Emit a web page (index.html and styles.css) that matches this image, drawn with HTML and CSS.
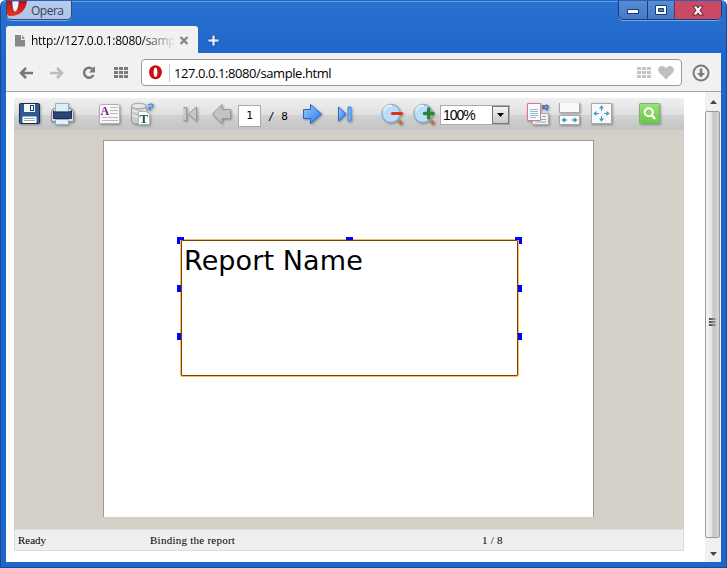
FILE: index.html
```
<!DOCTYPE html>
<html lang="en">
<head>
<meta charset="utf-8">
<title>http://127.0.0.1:8080/sample.html</title>
<link rel="stylesheet" href="styles.css">
</head>
<body>
<div class="window">
  <header class="titlebar">
    <div class="opera-menu">
      <svg width="23" height="17" viewBox="0 0 23 17"><defs><linearGradient id="or" x2="0" y2="1"><stop stop-color="#b81410"/><stop offset="1" stop-color="#e83426"/></linearGradient></defs><path d="M0 0H20C19 9 13 15 3 15Q0 15 0 12Z" fill="url(#or)"/><path d="M5 0H12C12 6 10 11 8 11S5 6 5 0Z" fill="#eef3fc" stroke="#8c2637" stroke-width=".7"/></svg>
      <span>Opera</span>
    </div>
    <div class="controls">
      <div class="control minimize"><svg width="14" height="8" viewBox="0 0 14 8"><rect x="1.5" y="1.5" width="11" height="4" fill="#fff" stroke="#173c78"/></svg></div>
      <div class="control maximize"><svg width="12" height="10" viewBox="0 0 12 10"><path fill-rule="evenodd" d="M.5.5h11v9H.5ZM3.5 3.5v3h5v-3Z" fill="#fff" stroke="#173c78"/></svg></div>
      <div class="control close"><svg width="12" height="11" viewBox="0 0 12 11"><path d="M1 1H4.5L6 3 7.5 1H11L8 5.3 11.3 10H7.5L6 7.8 4.5 10H.7L4 5.3Z" fill="#fff" stroke="#6d1e38"/></svg></div>
    </div>
  </header>
  <div class="tabs">
    <div class="tab">
      <svg width="11" height="12" viewBox="0 0 11 12"><path d="M0 0H6V5H10V11.5H0Z M7 0 10 4H7Z" fill="#888"/></svg>
      <span class="tab-title">http://127.0.0.1:8080/samp</span>
      <svg class="tab-close" width="10" height="9" viewBox="0 0 10 9"><path d="M1.5 1 8.5 8M8.5 1 1.5 8" stroke="#858585" stroke-width="2.3"/></svg>
    </div>
    <svg class="new-tab" width="13" height="13" viewBox="0 0 13 13"><path d="M5 1H8V5H12V8H8V12H5V8H1V5H5Z" fill="#e2efff" stroke="#174e9e" stroke-width=".8"/></svg>
  </div>
  <nav class="navigation">
    <svg class="back" width="14" height="12" viewBox="0 0 14 12"><path d="M14 6H3M7 1 2 6 7 11" fill="none" stroke="#737779" stroke-width="2.5"/></svg>
    <svg class="forward" width="14" height="12" viewBox="0 0 14 12"><path d="M0 6H11M7 1 12 6 7 11" fill="none" stroke="#babcbd" stroke-width="2.5"/></svg>
    <svg class="reload" width="14" height="14" viewBox="0 0 14 14"><path d="M10.5 3A5 5 0 1 0 11.5 9" fill="none" stroke="#777b7d" stroke-width="2.5"/><path d="M13 0V6.5H7Z" fill="#777b7d"/></svg>
    <svg class="speed" width="15" height="12" viewBox="0 0 15 12"><path d="M0 0h4v3H0zm5 0h4v3H5zm5 0h4v3h-4zM0 4h4v3H0zm5 0h4v3H5zm5 0h4v3h-4zM0 8h4v3H0zm5 0h4v3H5zm5 0h4v3h-4z" fill="#777b7d"/></svg>
    <div class="address">
      <svg class="opera-badge" width="14" height="15" viewBox="0 0 14 15"><ellipse cx="6.5" cy="7.2" rx="6.4" ry="7" fill="#c90d16"/><ellipse cx="6.5" cy="7.2" rx="1.9" ry="4.8" fill="#fff"/></svg>
      <span class="url">127.0.0.1:8080/sample.html</span>
      <svg width="15" height="12" viewBox="0 0 15 12"><path d="M0 0h4v3H0zm5 0h4v3H5zm5 0h4v3h-4zM0 4h4v3H0zm5 0h4v3H5zm5 0h4v3h-4zM0 8h4v3H0zm5 0h4v3H5zm5 0h4v3h-4z" fill="#c4c4c4"/></svg>
      <svg class="heart" width="16" height="14" viewBox="0 0 16 14"><path d="M8 13.5 1.5 7C-1.5 3.5 1 0 4.2 0 6 0 7.2 1 8 2.3 8.8 1 10 0 11.8 0 15 0 17.5 3.5 14.5 7Z" fill="#c0c0c0"/></svg>
    </div>
    <svg class="downloads" width="18" height="18" viewBox="0 0 18 18"><circle cx="9" cy="9" r="7.5" fill="none" stroke="#777b7d" stroke-width="2"/><path d="M7.7 4.5h2.6V9H13L9 13.5 5 9H7.7Z" fill="#777b7d"/></svg>
  </nav>
  <main class="content">
    <section class="viewer">
      <div class="toolbar">
        <svg class="save" width="24" height="24" viewBox="0 0 24 24"><rect x="1.5" y="1.5" width="20" height="20" rx="1" fill="#31578f" stroke="#172e53"/><path d="M6 2H17V10H6Z" fill="#f1f5f9"/><path d="M12 3H16V9H12Z" fill="#263f68"/><path d="M13 4h2v4h-2z" fill="#e9eff7"/><path d="M4.5 14.5H18.5V21H4.5Z" fill="#fff"/><path d="M6 16.5H17M6 18.5H17" stroke="#9caaa7"/></svg>
        <svg class="print" width="26" height="24" viewBox="0 0 26 24"><path d="M1.5 10Q2 6.5 5 6.5H20Q23 6.5 23.5 10V19.5H1.5Z" fill="#dce0e5" stroke="#7e899a"/><path d="M5.5 1.5H18.5V10H5.5Z" fill="#daf0f5" stroke="#99b3b9"/><path d="M3.5 9Q4 10 6 10H18Q21 10 21.5 8.5V16.5H3.5Z" fill="#2c4478" stroke="#18294e"/><path d="M5.5 17.5H18.5V22.5H5.5Z" fill="#dff3f7" stroke="#95b1b8"/></svg>
        <svg class="parameters" width="24" height="24" viewBox="0 0 24 24"><rect x="1.5" y="2.5" width="20" height="19" rx="1" fill="#f8f7f7" stroke="#b5afb5"/><path d="M12 5.5H20M12 8.5H20M12 11.5H20M4 15.5H20M4 18.5H20" stroke="#bbb"/><text class="icon-a" x="2.5" y="13">A</text></svg>
        <svg class="data" width="26" height="24" viewBox="0 0 26 24"><path d="M1.5 4V19Q2 22 9 22Q16 22 16 19V4Z" fill="#c8cbcb" stroke="#999e9e"/><ellipse cx="8.7" cy="4" rx="7.2" ry="2.7" fill="#e5e9e9" stroke="#a0a5a5"/><path d="M2 8Q8 12 16 8M2 13Q8 17 16 13" fill="none" stroke="#eef3f3" stroke-width="1.5"/><path d="M8.5 9.5H16L19.5 12V22.5H8.5Z" fill="#fff" stroke="#b1b5b2"/><text class="icon-t" x="9.5" y="20.5">T</text><path d="M18 3.5Q19 2 21 2Q23.5 2.5 22.5 5Q21 6.5 18.5 6.5M20.5 4.5 18.5 6.5 20.5 8.5" fill="none" stroke="#568ce0" stroke-width="1.7"/></svg>
        <svg class="first" width="18" height="22" viewBox="0 0 18 22"><path d="M1.5 4.5H4.5V17.5H1.5M14.5 4V18L6.5 11Z" fill="#c8c8c8" stroke="#999"/></svg>
        <svg class="previous" width="24" height="24" viewBox="0 0 24 24"><path d="M1.5 12 11 2.5V7.5H19.5V16.5H11V21.5Z" fill="#c3c3c3" stroke="#999"/></svg>
        <input class="page-input" aria-label="Page" value="1">
        <span class="page-total">/ 8</span>
        <svg class="next" width="22" height="24" viewBox="0 0 22 24"><defs><linearGradient id="bl" x2="1" y2="1"><stop stop-color="#9bd2ff"/><stop offset="1" stop-color="#2670ee"/></linearGradient></defs><path d="M1.5 7.5H8.5V2.5L19.5 12 8.5 21.5V16.5H1.5Z" fill="url(#bl)" stroke="#2366cf"/></svg>
        <svg class="last" width="17" height="22" viewBox="0 0 17 22"><path d="M1.5 4V18L9 11Z" fill="url(#bl)" stroke="#2366cf"/><path d="M11 4H14V18H11Z" fill="#72b4ff" stroke="#4288e8"/></svg>
        <svg class="zoom-out" width="26" height="24" viewBox="0 0 26 24"><path d="m16 16 4 4" stroke="#8a9fac" stroke-width="2"/><path d="m19 19 3 3" stroke="#bb7b3b" stroke-width="3.5"/><circle cx="11" cy="11.5" r="9" fill="#bcdefa" stroke="#8bb0ce" stroke-width="1.3"/><path d="M3.5 9Q6 3 12 4" fill="none" stroke="#e0f2ff" stroke-width="2"/><path d="M12.5 11.5H21.5" stroke="#df3211" stroke-width="3.2" stroke-linecap="round"/></svg>
        <svg class="zoom-in" width="26" height="24" viewBox="0 0 26 24"><path d="m16 16 4 4" stroke="#8a9fac" stroke-width="2"/><path d="m19 19 3 3" stroke="#bb7b3b" stroke-width="3.5"/><circle cx="11" cy="11.5" r="9" fill="#bcdefa" stroke="#8bb0ce" stroke-width="1.3"/><path d="M3.5 9Q6 3 12 4" fill="none" stroke="#e0f2ff" stroke-width="2"/><path d="M12.5 11.5H21M16.7 7V16" stroke="#2c8430" stroke-width="3.6" stroke-linecap="round"/></svg>
        <div class="zoom-select"><span>100%</span><div class="select-button"><svg width="7" height="4" viewBox="0 0 7 4"><path d="M0 0H7L3.5 4Z"/></svg></div></div>
        <svg class="multi-page" width="25" height="24" viewBox="0 0 25 24"><path d="M6.5 11.5H22.5V22.5H6.5Z" fill="#f1f1f1" stroke="#aaa"/><path d="M16 14.5H20M13 17.5H20M9 20H20" stroke="#8daec8"/><path d="M1.5 1.5H14.5V18.5H1.5Z" fill="#f7fbfd" stroke="#d97b7b"/><path d="M4 7.5H12M4 9.5H12M4 11.5H12M4 13.5H12M4 15.5H10" stroke="#9ab8d0"/><path d="M17 3V6.5H20.5M17 6Q20 2 22 4Q22.5 6 20.5 8.5" fill="none" stroke="#406bc4" stroke-width="1.5"/></svg>
        <svg class="page-width" width="24" height="24" viewBox="0 0 24 24"><path d="M1.5 1V10.5H21.5V1M1.5 13.5H21.5V22.5H1.5Z" fill="#fafafa" stroke="#a7a7a7"/><path d="M5 18H9M14 18H18" stroke="#339dc5" stroke-width="1.3"/><path d="M3.5 18 7 15.2V20.8ZM19.5 18 16 15.2V20.8Z" fill="#339dc5"/></svg>
        <svg class="whole-page" width="24" height="24" viewBox="0 0 24 24"><rect x="1.5" y="1.5" width="20" height="20" fill="#f9f9f9" stroke="#aaa"/><path d="M11.5 4V9M11.5 19V14M4 11.5H9M19 11.5H14" stroke="#339dc5"/><path d="M11.5 3.3 14 6.5H9ZM11.5 19.7 9 16.5H14ZM3.3 11.5 6.5 9V14ZM19.7 11.5 16.5 14V9Z" fill="#339dc5"/></svg>
        <svg class="search" width="24" height="24" viewBox="0 0 24 24"><defs><linearGradient id="gr" x2="0" y2="1"><stop stop-color="#9be07d"/><stop offset="1" stop-color="#6bc846"/></linearGradient></defs><rect x="1.5" y="1.5" width="20" height="20" rx="1" fill="url(#gr)" stroke="#77b863"/><circle cx="10.8" cy="10.3" r="4" fill="none" stroke="#fff" stroke-width="2"/><path d="m14 13.5 3 3.5" stroke="#fff" stroke-width="2.5"/></svg>
      </div>
      <div class="canvas">
        <div class="page">
          <div class="report-item">Report Name
            <i class="handle top left"></i><i class="handle top center"></i><i class="handle top right"></i>
            <i class="handle upper left"></i><i class="handle upper right"></i><i class="handle lower left"></i><i class="handle lower right"></i>
          </div>
        </div>
      </div>
      <footer class="status"><span class="status-ready">Ready</span><span class="status-action">Binding the report</span><span>1 / 8</span></footer>
    </section>
    <div class="scrollbar">
      <div class="scroll-button"><svg width="7" height="4" viewBox="0 0 7 4"><path d="M0 4H7L3.5 0Z" fill="#444"/></svg></div>
      <div class="thumb"><i></i><i></i><i></i></div>
      <div class="scroll-button"><svg width="7" height="4" viewBox="0 0 7 4"><path d="M0 0H7L3.5 4Z" fill="#444"/></svg></div>
    </div>
  </main>
</div>
</body>
</html>
```
FILE: styles.css
```
* { box-sizing: border-box; }
html, body { margin: 0; width: 727px; height: 568px; overflow: hidden; background: #fff; }
svg { display: block; flex: none; }
.window { width: 727px; height: 568px; padding: 0 5px 5px; border: 1px solid #174a91; border-top-color: #2862b5; border-radius: 6px 6px 0 0; background: linear-gradient(#2b70d0, #1e66ca 60px); box-shadow: inset 0 1px #59a2ee; display: flex; flex-direction: column; font-family: "Open Sans", sans-serif; }
.titlebar { height: 25px; display: flex; justify-content: space-between; align-items: flex-start; flex: none; }
.opera-menu { width: 66px; height: 19px; display: flex; border: 1px solid #314b73; border-top: 0; border-radius: 0 0 5px 5px; background: linear-gradient(#b9cbec, #afc4e6); color: #34445b; font-size: 12px; line-height: 19px; box-shadow: 0 1px #70a7ed; }
.opera-menu span { margin-left: 1px; letter-spacing: -.5px; }
.controls { display: flex; height: 19px; margin-right: -1px; border: 1px solid #173d79; border-top: 0; border-radius: 0 0 5px 5px; overflow: hidden; box-shadow: 0 1px #79a4de; }
.control { display: flex; align-items: center; justify-content: center; background: linear-gradient(#598cd3, #4279c9); }
.minimize { width: 28px; padding-top: 4px; }
.maximize { width: 27px; border-left: 1px solid #173d79; }
.close { width: 47px; border-left: 1px solid #713052; background: #c94a62; }
.tabs { height: 27px; display: flex; align-items: flex-start; flex: none; }
.tab { height: 29px; width: 192px; padding-left: 9px; display: flex; align-items: center; border-radius: 3px 3px 0 0; background: #f1f1f1; z-index: 1; }
.tab-title { width: 143px; margin-left: 5px; white-space: nowrap; font-size: 12px; letter-spacing: -.28px; mask-image: linear-gradient(90deg, #000 76%, transparent 102%); }
.tab-close { margin-left: 5px; }
.new-tab { margin: 8px 0 0 9px; }
.navigation { height: 39px; flex: none; display: flex; align-items: center; background: #f1f1f1; border-top: 1px solid #f7f7f7; border-bottom: 1px solid #a0a0a0; }
.back { margin-left: 13px; }
.forward { margin-left: 17px; }
.reload { margin-left: 18px; }
.speed { margin-left: 18px; }
.address { width: 541px; height: 27px; margin-left: 12px; padding: 0 7px; display: flex; align-items: center; border: 1px solid #999; border-radius: 4px; background: #fff; }
.url { flex: 1; margin-left: 6px; padding-left: 4px; border-left: 1px solid #ccc; font-size: 13px; letter-spacing: -.42px; line-height: 18px; }
.heart { margin-left: 6px; }
.downloads { margin-left: 10px; }
.content { flex: 1; min-height: 0; display: flex; justify-content: space-between; background: #fff; }
.viewer { width: 670px; height: 453px; margin: 6px 0 0 8px; display: flex; flex-direction: column; }
.toolbar { height: 32px; padding-left: 4px; display: flex; align-items: center; flex: none; background: linear-gradient(#f0f0f0, #dfdfdf 53%, #d2d2d2 54%, #c4c4c4); }
.toolbar svg { filter: drop-shadow(1px 1px 1px #0005); }
.toolbar .select-button svg { filter: none; }
.print { margin-left: 8px; }
.parameters { margin-left: 22px; }
.data { margin-left: 8px; }
.icon-a { font: bold 12px "Liberation Serif", serif; fill: #78247d; }
.icon-t { font: bold 13px "Liberation Serif", serif; fill: #15642d; }
.first { margin-left: 26px; }
.previous { margin-left: 11px; }
.page-input { width: 23px; height: 22px; margin: 3px 0 0 3px; padding: 0; border: 1px solid #aaa; background: #fff; font: 11px "DejaVu Sans Mono", monospace; text-align: center; }
.page-total { width: 26px; margin: 4px 0 0 7px; font: 11px "DejaVu Sans Mono", monospace; white-space: nowrap; }
.next { margin-left: 8px; }
.last { margin-left: 13px; }
.zoom-out { margin-left: 26px; }
.zoom-in { margin-left: 6px; }
.zoom-select { width: 70px; height: 20px; margin: 2px 0 0 2px; display: flex; align-items: center; justify-content: space-between; border: 1px solid #aaa; padding-left: 2px; background: #fff; font: 14px "Liberation Sans", sans-serif; }
.zoom-select span { letter-spacing: -1px; }
.select-button { width: 17px; height: 18px; display: flex; align-items: center; justify-content: center; border: 1px solid #777; background: linear-gradient(#f3f3f3, #c9c9c9); }
.multi-page { margin-left: 16px; }
.page-width { margin-left: 7px; }
.whole-page { margin-left: 8px; }
.search { margin-left: 24px; }
.canvas { height: 399px; padding: 10px 0 0 89px; background: #d4d0c8; }
.page { width: 491px; height: 377px; padding: 99px 0 0 77px; border: 1px solid #999; border-bottom: 0; background: #fff; }
.report-item { position: relative; width: 337px; height: 136px; padding: 4px 0 0 2px; border: 1px solid #744600; border-radius: 1px; box-shadow: 0 0 0 1px #f5bc65; color: #000; background: #fff; font: 27px/32px "DejaVu Sans", sans-serif; letter-spacing: .1px; white-space: nowrap; }
.handle { position: absolute; width: 7px; height: 7px; background: #00f; }
.top { top: -4px; clip-path: polygon(0 0, 100% 0, 100% 3px, 3px 3px, 3px 100%, 0 100%); }
.left { left: -5px; }
.right { right: -5px; }
.center { left: 164px; height: 3px; clip-path: none; }
.top.right { clip-path: polygon(0 0, 100% 0, 100% 100%, 4px 100%, 4px 3px, 0 3px); }
.upper, .lower { width: 4px; }
.upper { top: 44px; }
.lower { top: 92px; }
.status { height: 22px; padding-left: 3px; display: flex; align-items: center; border: 1px solid #ddd; background: #efefef; color: #000; font: 11px "Liberation Serif", serif; letter-spacing: .25px; }
.status-ready { width: 132px; letter-spacing: 0; }
.status-action { width: 332px; }
.scrollbar { width: 16px; display: flex; flex-direction: column; background: #f0f0f0; }
.scroll-button { height: 19px; display: flex; align-items: center; justify-content: center; }
.thumb { flex: 1; margin: 0 1px 0 0; padding-bottom: 5px; display: flex; flex-direction: column; align-items: center; justify-content: center; gap: 1px; border: 1px solid #999; border-radius: 2px; background: linear-gradient(90deg, #f4f4f4, #e3e3e5 45%, #c3c3c8 55%, #d5d5da); }
.scrollbar .scroll-button:last-child { height: 24px; margin-top: -5px; padding-top: 7px; }
.thumb { margin-bottom: 5px; }
.thumb i { width: 7px; height: 2px; background: linear-gradient(90deg, #444, #aaa); }
```
